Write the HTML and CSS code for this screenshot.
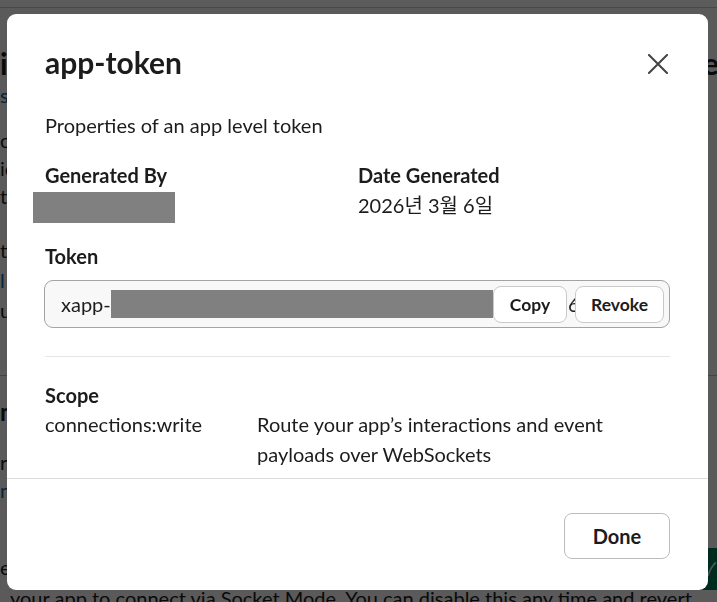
FILE: index.html
```html
<!DOCTYPE html>
<html lang="en">
<head>
<meta charset="utf-8">
<title>app-token</title>
<link rel="stylesheet" href="styles.css">
</head>
<body>
<div class="page">
  <div class="topbar"></div>
  <div class="bg-content">
    <div class="bg-h1">ive Socket Mode for your app here and there see</div>
    <div class="bg-line bg-link">s Socket Mode settings</div>
    <div class="bg-para">
      <div class="bg-line">onnect your app to Slack using WebSockets instead of HTTP</div>
      <div class="bg-line">ic event subscriptions and interactive components will be s</div>
      <div class="bg-line">t over a secure connection.</div>
    </div>
    <div class="bg-para bg-para2">
      <div class="bg-line">tion: turning this on will route your app's interactions b</div>
      <div class="bg-line bg-link">l Learn more about Socket Mode o</div>
      <div class="bg-line">unless you switch back to HTTP endpoints.</div>
    </div>
    <hr class="bg-rule">
    <div class="bg-h2">n(Socket Mode) Connect using Socket Mode</div>
    <div class="bg-line bg-gap">r tokens are listed here for this app</div>
    <div class="bg-line bg-link">nage app-level tokens</div>
    <div class="bg-toggle-row">
      <div class="bg-line">enable Socket Mode</div>
      <div class="bg-toggle">✓</div>
    </div>
    <div class="bg-line bg-last">your app to connect via Socket Mode. You can disable this any time and revert</div>
  </div>
</div>

<div class="overlay">
  <div class="modal">
    <div class="modal-header">
      <h1 class="modal-title">app-token</h1>
      <button class="close-btn" aria-label="Close">
        <svg width="20" height="20" viewBox="0 0 20 20"><path d="M1 1 L19 19 M19 1 L1 19" stroke="#454245" stroke-width="2" fill="none" stroke-linecap="square"/></svg>
      </button>
    </div>
    <div class="modal-body">
      <p class="desc">Properties of an app level token</p>
      <div class="meta">
        <div class="meta-col">
          <div class="label">Generated By</div>
          <div class="redact redact-user"></div>
        </div>
        <div class="meta-col">
          <div class="label">Date Generated</div>
          <div class="value">2026년 3월 6일</div>
        </div>
      </div>
      <div class="label token-label">Token</div>
      <div class="token-field">
        <span class="token-prefix">xapp-</span>
        <span class="redact redact-token"></span>
        <button class="btn btn-sm btn-copy">Copy</button>
        <span class="token-peek">6</span>
        <button class="btn btn-sm btn-revoke">Revoke</button>
      </div>
      <hr class="divider">
      <div class="label">Scope</div>
      <div class="scope-row">
        <div class="scope-name">connections:write</div>
        <div class="scope-desc">Route your app’s interactions and event payloads over WebSockets</div>
      </div>
    </div>
    <div class="modal-footer">
      <button class="btn btn-done">Done</button>
    </div>
  </div>
</div>
</body>
</html>
```
FILE: styles.css
```css
html, body {
  margin: 0;
  padding: 0;
  width: 717px;
  height: 602px;
  overflow: hidden;
}
body {
  font-family: Lato, "Noto Sans CJK KR", "Noto Sans", sans-serif;
  color: #1d1c1d;
  background: #f8f8f8;
}

/* ---------- background page ---------- */
.page {
  width: 717px;
  height: 602px;
  overflow: hidden;
}
.topbar {
  height: 7px;
  background: #ffffff;
  border-bottom: 1px solid #c8c8c8;
}
.bg-content {
  white-space: nowrap;
}
.bg-h1 {
  margin-top: 37px;
  font-size: 30px;
  font-weight: 700;
  line-height: 36px;
  letter-spacing: 2px;
}
.bg-line {
  font-size: 20px;
  line-height: 28px;
}
.bg-link { color: #1264a3; }
.bg-para { margin-top: 17px; }
.bg-para2 { margin-top: 25px; }
.bg-para2 .bg-line { line-height: 30px; }
.bg-rule {
  margin: 50px 0 0 0;
  border: 0;
  border-top: 1px solid #bdbdbd;
}
.bg-h2 {
  margin-top: 21px;
  font-size: 24px;
  font-weight: 700;
  line-height: 30px;
}
.bg-gap { margin-top: 21px; }
.bg-toggle-row {
  margin-top: 44px;
  height: 38px;
  display: flex;
  justify-content: space-between;
  align-items: center;
}
.bg-toggle {
  width: 26px;
  height: 42px;
  margin-top: 4px;
  background: #007a5a;
  color: #ffffff;
  border-radius: 6px 0 0 6px;
  font-size: 18px;
  line-height: 42px;
  text-align: right;
  padding-right: 1px;
  box-sizing: border-box;
}
.bg-last {
  line-height: 24px;
  padding-left: 10px;
}

/* ---------- overlay & modal ---------- */
.overlay {
  position: fixed;
  inset: 0;
  background: rgba(0, 0, 0, 0.64);
}
.modal {
  position: absolute;
  left: 7px;
  top: 14px;
  width: 701px;
  height: 576px;
  background: #ffffff;
  border-radius: 9px;
  display: flex;
  flex-direction: column;
  overflow: hidden;
}
.modal-header {
  flex: none;
  display: flex;
  align-items: center;
  justify-content: space-between;
  padding: 29px 32px 0 38px;
  height: 38px;
}
.modal-title {
  margin: 0;
  font-size: 30px;
  font-weight: 700;
  line-height: 38px;
  letter-spacing: 0;
}
.close-btn {
  width: 36px;
  height: 36px;
  margin-top: 4px;
  border: 0;
  background: transparent;
  padding: 0;
  display: flex;
  align-items: center;
  justify-content: center;
}
.modal-body {
  flex: 1;
  padding: 0 38px;
  overflow: hidden;
}
.desc {
  margin: 31px 0 0 0;
  font-size: 20px;
  line-height: 26px;
}
.meta {
  display: grid;
  grid-template-columns: 313px 1fr;
  margin-top: 24px;
}
.label {
  font-size: 20px;
  font-weight: 700;
  line-height: 26px;
}
.value {
  margin-top: 4px;
  font-size: 20px;
  line-height: 26px;
}
.redact {
  background: #808080;
  display: block;
}
.redact-user {
  margin-top: 4px;
  margin-left: -12px;
  width: 142px;
  height: 31px;
}
.token-label { margin-top: 20px; }
.token-field {
  margin-top: 11px;
  margin-left: -1px;
  height: 48px;
  box-sizing: border-box;
  border: 1px solid #a3a3a3;
  border-radius: 9px;
  background: #f8f8f8;
  display: flex;
  align-items: center;
  padding: 0 5px 0 16px;
  overflow: hidden;
}
.token-prefix {
  font-size: 20px;
  line-height: 26px;
  color: #1d1c1d;
}
.redact-token {
  flex: 1;
  height: 28px;
}
.token-peek {
  width: 8px;
  overflow: hidden;
  font-size: 20px;
  line-height: 26px;
  padding-left: 1px;
  box-sizing: border-box;
}
.btn {
  font-family: Lato, "Noto Sans", sans-serif;
  font-weight: 700;
  color: #1d1c1d;
  background: #ffffff;
  border: 1px solid #c9c9c9;
  border-radius: 8px;
  padding: 0;
  cursor: pointer;
}
.btn-sm {
  height: 37px;
  font-size: 17.5px;
}
.btn-copy { width: 74px; }
.btn-revoke { width: 89px; }
.divider {
  margin: 28px 0 0 0;
  border: 0;
  border-top: 1px solid #e6e6e6;
}
.divider + .label { margin-top: 25px; }
.scope-row {
  display: grid;
  grid-template-columns: 212px 1fr;
  font-size: 20px;
  line-height: 30px;
  margin-top: 1px;
}
.modal-footer {
  flex: none;
  height: 112px;
  box-sizing: border-box;
  border-top: 1px solid #dddddd;
  display: flex;
  justify-content: flex-end;
  align-items: flex-start;
  padding: 34px 38px 0 0;
}
.btn-done {
  width: 106px;
  height: 46px;
  font-size: 20px;
  border-color: #bcbcbc;
}
```
